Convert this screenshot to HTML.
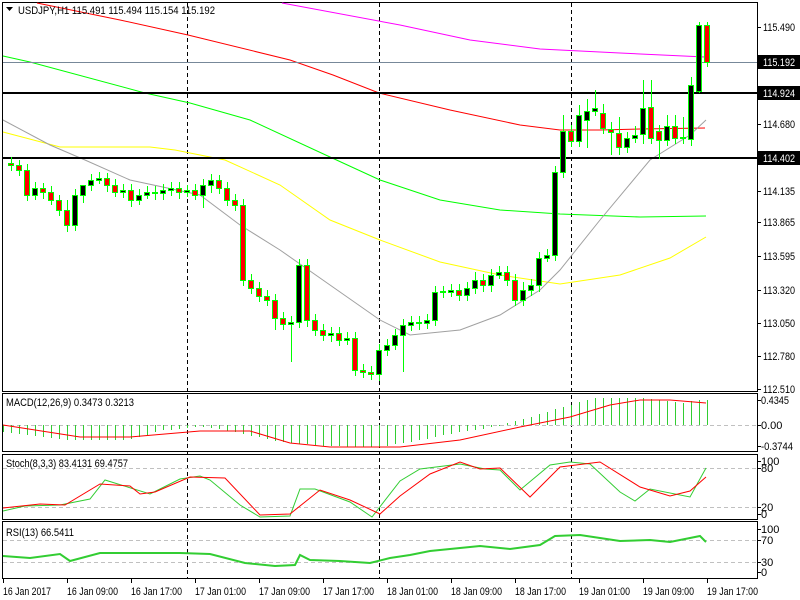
<!DOCTYPE html>
<html><head><meta charset="utf-8"><style>
html,body{margin:0;padding:0;background:#fff;width:800px;height:600px;overflow:hidden}
svg{display:block}
text{font-family:"Liberation Sans",sans-serif;font-size:11px;fill:#000}
.w{fill:#fff}
</style></head><body>
<svg width="800" height="600" xmlns="http://www.w3.org/2000/svg">
<rect width="800" height="600" fill="#fff"/>
<g fill="none" stroke="#000" stroke-width="1">
<rect x="2.5" y="2.5" width="755" height="389"/>
<rect x="2.5" y="393.5" width="755" height="58"/>
<rect x="2.5" y="454.5" width="755" height="65"/>
<rect x="2.5" y="521.5" width="755" height="57"/>
</g>
<g stroke="#000" stroke-dasharray="4,3" stroke-width="1">
<line x1="187.5" y1="3" x2="187.5" y2="578"/>
<line x1="379.5" y1="3" x2="379.5" y2="578"/>
<line x1="571.5" y1="3" x2="571.5" y2="578"/>
</g>
<g stroke="#c0c0c0" stroke-dasharray="4,3">
<line x1="3" y1="425.5" x2="757" y2="425.5"/>
<line x1="3" y1="468.5" x2="757" y2="468.5"/>
<line x1="3" y1="507.5" x2="757" y2="507.5"/>
<line x1="3" y1="540.5" x2="757" y2="540.5"/>
<line x1="3" y1="562.5" x2="757" y2="562.5"/>
</g>
<g fill="none" stroke-width="1">
<polyline stroke="#ff00ff" points="282,3 400,25 470,40 540,49 620,53 705,57"/>
<polyline stroke="#ff0000" points="37,3 120,20 188,35 290,60 333,75 379,93 450,110 520,125 560,130 600,130 640,129 705,128"/>
<polyline stroke="#00ff00" points="3,56 30,62 145,93 190,103 250,120 330,157 380,180 440,200 500,210 560,214 640,217 706,216"/>
<polyline stroke="#ffff00" points="3,132 60,147 150,147 175,150 225,160 280,185 330,220 380,240 440,262 500,275 560,284 620,275 670,258 706,237"/>
<polyline stroke="#a0a0a0" points="3,120 50,145 85,160 130,180 200,195 240,225 280,250 330,285 380,320 410,335 460,330 500,315 540,290 560,270 600,220 650,160 690,135 706,120"/>
</g>
<line x1="3" y1="62.5" x2="757" y2="62.5" stroke="#778899"/>
<line x1="3" y1="93" x2="757" y2="93" stroke="#000" stroke-width="2"/>
<line x1="3" y1="158" x2="757" y2="158" stroke="#000" stroke-width="2"/>
<!-- wicks -->
<path stroke="#00ff00" fill="none" d="M11.5 157V171M19.5 160V176M27.5 164V201M35.5 182V200M43.5 183V199M51.5 186V205M59.5 195V216M67.5 200V232M75.5 189V231M83.5 187V203M91.5 174V191M99.5 172V184M107.5 173V192M115.5 179V197M123.5 184V198M131.5 184V207M139.5 189V205M147.5 186V199M155.5 186V200M163.5 184V200M171.5 182V196M179.5 182V199M187.5 185V197M195.5 184V200M203.5 179V208M211.5 174V193M219.5 175V194M227.5 182V206M235.5 194V211M243.5 199V286M251.5 274V294M259.5 282V302M267.5 290V306M275.5 294V330M283.5 312V330M291.5 316V362M299.5 259V328M307.5 259V327M315.5 314V336M323.5 324V341M331.5 327V342M339.5 327V346M347.5 332V345M355.5 332V376M363.5 364V378M371.5 366V380M379.5 344V381M387.5 339V356M395.5 329V350M403.5 319V372M411.5 316V331M419.5 316V330M427.5 314V329M435.5 286V326M443.5 286V298M451.5 284V297M459.5 284V301M467.5 282V301M475.5 272V294M483.5 274V292M491.5 269V292M499.5 266V279M507.5 266V286M515.5 274V306M523.5 282V306M531.5 279V296M539.5 252V292M547.5 249V262M555.5 166V261M563.5 115V178M571.5 125V147M579.5 105V147M587.5 99V148M595.5 90V116M603.5 104V134M611.5 122V155M619.5 117V155M627.5 132V153M635.5 126V143M643.5 80V144M651.5 80V144M659.5 125V159M667.5 115V146M675.5 115V144M683.5 117V144M691.5 77V146M699.5 22V93M707.5 22V67"/>
<!-- bodies -->
<g stroke="#00ff00" stroke-width="1">
<rect x="8.5" y="163.5" width="5" height="2" fill="#f00"/>
<rect x="16.5" y="165.5" width="5" height="5" fill="#f00"/>
<rect x="24.5" y="170.5" width="5" height="25" fill="#f00"/>
<rect x="32.5" y="188.5" width="5" height="7" fill="#000"/>
<rect x="40.5" y="188.5" width="5" height="4" fill="#f00"/>
<rect x="48.5" y="192.5" width="5" height="8" fill="#f00"/>
<rect x="56.5" y="200.5" width="5" height="10" fill="#f00"/>
<rect x="64.5" y="210.5" width="5" height="15" fill="#f00"/>
<rect x="72.5" y="195.5" width="5" height="30" fill="#000"/>
<rect x="80.5" y="185.5" width="5" height="10" fill="#000"/>
<rect x="88.5" y="180.5" width="5" height="5" fill="#000"/>
<rect x="96.5" y="178.5" width="5" height="2" fill="#000"/>
<rect x="104.5" y="178.5" width="5" height="7" fill="#f00"/>
<rect x="112.5" y="185.5" width="5" height="7" fill="#f00"/>
<rect x="120.5" y="190.5" width="5" height="2" fill="#000"/>
<rect x="128.5" y="190.5" width="5" height="10" fill="#f00"/>
<rect x="136.5" y="195.5" width="5" height="5" fill="#000"/>
<rect x="144.5" y="192.5" width="5" height="3" fill="#000"/>
<rect x="152.5" y="192.5" width="5" height="1" fill="#f00"/>
<rect x="160.5" y="190.5" width="5" height="3" fill="#000"/>
<rect x="168.5" y="188.5" width="5" height="2" fill="#000"/>
<rect x="176.5" y="188.5" width="5" height="4" fill="#f00"/>
<rect x="184.5" y="190.5" width="5" height="2" fill="#000"/>
<rect x="192.5" y="190.5" width="5" height="5" fill="#f00"/>
<rect x="200.5" y="185.5" width="5" height="10" fill="#000"/>
<rect x="208.5" y="180.5" width="5" height="5" fill="#000"/>
<rect x="216.5" y="180.5" width="5" height="8" fill="#f00"/>
<rect x="224.5" y="188.5" width="5" height="12" fill="#f00"/>
<rect x="232.5" y="200.5" width="5" height="5" fill="#f00"/>
<rect x="240.5" y="205.5" width="5" height="75" fill="#f00"/>
<rect x="248.5" y="280.5" width="5" height="8" fill="#f00"/>
<rect x="256.5" y="288.5" width="5" height="8" fill="#f00"/>
<rect x="264.5" y="296.5" width="5" height="4" fill="#f00"/>
<rect x="272.5" y="300.5" width="5" height="18" fill="#f00"/>
<rect x="280.5" y="318.5" width="5" height="6" fill="#f00"/>
<rect x="288.5" y="322.5" width="5" height="2" fill="#000"/>
<rect x="296.5" y="265.5" width="5" height="57" fill="#000"/>
<rect x="304.5" y="265.5" width="5" height="55" fill="#f00"/>
<rect x="312.5" y="320.5" width="5" height="10" fill="#f00"/>
<rect x="320.5" y="330.5" width="5" height="5" fill="#f00"/>
<rect x="328.5" y="333.5" width="5" height="2" fill="#000"/>
<rect x="336.5" y="333.5" width="5" height="7" fill="#f00"/>
<rect x="344.5" y="338.5" width="5" height="2" fill="#000"/>
<rect x="352.5" y="338.5" width="5" height="32" fill="#f00"/>
<rect x="360.5" y="370.5" width="5" height="2" fill="#f00"/>
<rect x="368.5" y="372.5" width="5" height="2" fill="#f00"/>
<rect x="376.5" y="350.5" width="5" height="24" fill="#000"/>
<rect x="384.5" y="345.5" width="5" height="5" fill="#000"/>
<rect x="392.5" y="335.5" width="5" height="10" fill="#000"/>
<rect x="400.5" y="325.5" width="5" height="10" fill="#000"/>
<rect x="408.5" y="322.5" width="5" height="3" fill="#000"/>
<rect x="416.5" y="322.5" width="5" height="1" fill="#f00"/>
<rect x="424.5" y="320.5" width="5" height="3" fill="#000"/>
<rect x="432.5" y="292.5" width="5" height="28" fill="#000"/>
<rect x="440.5" y="291.5" width="5" height="1" fill="#000"/>
<rect x="448.5" y="290.5" width="5" height="2" fill="#000"/>
<rect x="456.5" y="290.5" width="5" height="5" fill="#f00"/>
<rect x="464.5" y="288.5" width="5" height="7" fill="#000"/>
<rect x="472.5" y="280.5" width="5" height="8" fill="#000"/>
<rect x="480.5" y="280.5" width="5" height="5" fill="#f00"/>
<rect x="488.5" y="275.5" width="5" height="10" fill="#000"/>
<rect x="496.5" y="272.5" width="5" height="3" fill="#000"/>
<rect x="504.5" y="272.5" width="5" height="8" fill="#f00"/>
<rect x="512.5" y="280.5" width="5" height="20" fill="#f00"/>
<rect x="520.5" y="290.5" width="5" height="10" fill="#000"/>
<rect x="528.5" y="285.5" width="5" height="5" fill="#000"/>
<rect x="536.5" y="258.5" width="5" height="27" fill="#000"/>
<rect x="544.5" y="255.5" width="5" height="3" fill="#000"/>
<rect x="552.5" y="172.5" width="5" height="83" fill="#000"/>
<rect x="560.5" y="131.5" width="5" height="41" fill="#000"/>
<rect x="568.5" y="131.5" width="5" height="10" fill="#f00"/>
<rect x="576.5" y="115.5" width="5" height="26" fill="#000"/>
<rect x="584.5" y="111.5" width="5" height="9" fill="#000"/>
<rect x="592.5" y="108.5" width="5" height="3" fill="#000"/>
<rect x="600.5" y="113.5" width="5" height="15" fill="#f00"/>
<rect x="608.5" y="129.5" width="5" height="3" fill="#f00"/>
<rect x="616.5" y="133.5" width="5" height="14" fill="#f00"/>
<rect x="624.5" y="138.5" width="5" height="9" fill="#000"/>
<rect x="632.5" y="135.5" width="5" height="3" fill="#000"/>
<rect x="640.5" y="108.5" width="5" height="26" fill="#000"/>
<rect x="648.5" y="107.5" width="5" height="31" fill="#f00"/>
<rect x="656.5" y="131.5" width="5" height="9" fill="#f00"/>
<rect x="664.5" y="126.5" width="5" height="14" fill="#000"/>
<rect x="672.5" y="126.5" width="5" height="12" fill="#f00"/>
<rect x="680.5" y="137.5" width="5" height="1" fill="#000"/>
<rect x="688.5" y="85.5" width="5" height="54" fill="#000"/>
<rect x="696.5" y="25.5" width="5" height="66" fill="#000"/>
<rect x="704.5" y="25.5" width="5" height="37" fill="#f00"/>
</g>
<!-- MACD histogram -->
<path stroke="#32cd32" fill="none" d="M3.5 425V432M11.5 425V433M19.5 425V434M27.5 425V435M35.5 425V436M43.5 425V437M51.5 425V438M59.5 425V439M67.5 425V440M75.5 425V440M83.5 425V440M91.5 425V440M99.5 425V440M107.5 425V440M115.5 425V440M123.5 425V440M131.5 425V439M139.5 425V437M147.5 425V435M155.5 425V432M163.5 425V430M171.5 425V430M179.5 425V429M187.5 425V428M195.5 425V427M203.5 425V427M211.5 425V428M219.5 425V429M227.5 425V431M235.5 425V432M243.5 425V434M251.5 425V436M259.5 425V437M267.5 425V439M275.5 425V441M283.5 425V442M291.5 425V443M299.5 425V444M307.5 425V444M315.5 425V445M323.5 425V446M331.5 425V446M339.5 425V446M347.5 425V447M355.5 425V447M363.5 425V447M371.5 425V447M379.5 425V447M387.5 425V446M395.5 425V444M403.5 425V443M411.5 425V442M419.5 425V440M427.5 425V439M435.5 425V437M443.5 425V435M451.5 425V434M459.5 425V432M467.5 425V431M475.5 425V430M483.5 425V429M491.5 425V427M499.5 425V426M507.5 425V423M515.5 425V421M523.5 425V419M531.5 425V417M539.5 425V414M547.5 425V412M555.5 425V409M563.5 425V407M571.5 425V405M579.5 425V402M587.5 425V400M595.5 425V398M603.5 425V398M611.5 425V398M619.5 425V398M627.5 425V398M635.5 425V398M643.5 425V398M651.5 425V399M659.5 425V400M667.5 425V401M675.5 425V402M683.5 425V403M691.5 425V401M699.5 425V400M707.5 425V400"/>
<polyline fill="none" stroke="#ff0000" points="3,425 80,437 130,437 200,431 250,431 290,443 330,447 400,447 460,440 520,427 570,417 610,405 640,400 670,400 706,403"/>
<polyline fill="none" stroke="#32cd32" points="3,511 25,506 60,505 90,499 105,480 150,494 180,479 200,476 210,480 240,505 260,517 290,516 300,489 315,489 350,502 372,517 400,481 420,469 460,464 485,469 500,470 520,490 550,465 570,462 590,464 620,492 635,501 650,489 690,497 706,468"/>
<polyline fill="none" stroke="#ff0000" points="3,508 40,504 65,505 100,484 130,486 140,494 155,492 190,477 225,478 260,515 290,514 320,490 350,500 380,514 400,496 430,474 460,462 480,469 500,468 530,497 560,467 600,462 640,487 670,496 690,491 706,477"/>
<polyline fill="none" stroke="#32cd32" stroke-width="2" points="3,556 30,558 60,554 70,561 100,553 150,553 180,553 210,554 245,563 275,566 295,565 300,555 310,560 340,561 370,563 390,558 410,555 430,551 450,549 480,546 510,549 540,545 555,536 580,535 600,538 620,541 650,540 670,542 690,538 700,536 706,542"/>
<path d="M6 7H13L9.5 11Z" fill="#000"/>
<text x="18" y="14" textLength="197" lengthAdjust="spacingAndGlyphs">USDJPY,H1  115.491 115.494 115.154 115.192</text>
<text x="6" y="406" textLength="128" lengthAdjust="spacingAndGlyphs">MACD(12,26,9) 0.3473 0.3213</text>
<text x="6" y="467" textLength="122" lengthAdjust="spacingAndGlyphs">Stoch(8,3,3) 83.4131 69.4757</text>
<text x="6" y="536" textLength="68" lengthAdjust="spacingAndGlyphs">RSI(13) 66.5411</text>
<path stroke="#000" d="M757 27.5h4M757 62.5h4M757 93.5h4M757 124.5h4M757 158.5h4M757 191.5h4M757 222.5h4M757 256.5h4M757 290.5h4M757 323.5h4M757 356.5h4M757 389.5h4M757 400.5h4M757 425.5h4M757 446.5h4M757 461.5h4M757 468.5h4M757 507.5h4M757 514.5h4M757 529.5h4M757 540.5h4M757 562.5h4M757 572.5h4M3.5 579v4M67.5 579v4M131.5 579v4M195.5 579v4M259.5 579v4M323.5 579v4M387.5 579v4M451.5 579v4M515.5 579v4M579.5 579v4M643.5 579v4M707.5 579v4"/>
<rect x="758" y="55" width="42" height="14" fill="#000"/>
<rect x="758" y="86" width="42" height="14" fill="#000"/>
<rect x="758" y="151" width="42" height="14" fill="#000"/>
<g>
<text x="763" y="31" textLength="32" lengthAdjust="spacingAndGlyphs">115.490</text>
<text x="763" y="66" class="w" textLength="32" lengthAdjust="spacingAndGlyphs">115.192</text>
<text x="763" y="97" class="w" textLength="32" lengthAdjust="spacingAndGlyphs">114.924</text>
<text x="763" y="128" textLength="32" lengthAdjust="spacingAndGlyphs">114.680</text>
<text x="763" y="162" class="w" textLength="32" lengthAdjust="spacingAndGlyphs">114.402</text>
<text x="763" y="195" textLength="32" lengthAdjust="spacingAndGlyphs">114.135</text>
<text x="763" y="226" textLength="32" lengthAdjust="spacingAndGlyphs">113.865</text>
<text x="763" y="260" textLength="32" lengthAdjust="spacingAndGlyphs">113.595</text>
<text x="763" y="294" textLength="32" lengthAdjust="spacingAndGlyphs">113.320</text>
<text x="763" y="327" textLength="32" lengthAdjust="spacingAndGlyphs">113.050</text>
<text x="763" y="360" textLength="32" lengthAdjust="spacingAndGlyphs">112.780</text>
<text x="763" y="393" textLength="32" lengthAdjust="spacingAndGlyphs">112.510</text>
<text x="761" y="404" textLength="28" lengthAdjust="spacingAndGlyphs">0.4345</text>
<text x="761" y="429">0.00</text>
<text x="761" y="450" textLength="32" lengthAdjust="spacingAndGlyphs">-0.3744</text>
<text x="761" y="465">100</text>
<text x="761" y="472">80</text>
<text x="761" y="511">20</text>
<text x="761" y="518">0</text>
<text x="761" y="533">100</text>
<text x="761" y="544">70</text>
<text x="761" y="566">30</text>
<text x="761" y="576">0</text>
</g>
<g>
<text x="3" y="595" textLength="48" lengthAdjust="spacingAndGlyphs">16 Jan 2017</text>
<text x="67" y="595" textLength="51" lengthAdjust="spacingAndGlyphs">16 Jan 09:00</text>
<text x="131" y="595" textLength="51" lengthAdjust="spacingAndGlyphs">16 Jan 17:00</text>
<text x="195" y="595" textLength="51" lengthAdjust="spacingAndGlyphs">17 Jan 01:00</text>
<text x="259" y="595" textLength="51" lengthAdjust="spacingAndGlyphs">17 Jan 09:00</text>
<text x="323" y="595" textLength="51" lengthAdjust="spacingAndGlyphs">17 Jan 17:00</text>
<text x="387" y="595" textLength="51" lengthAdjust="spacingAndGlyphs">18 Jan 01:00</text>
<text x="451" y="595" textLength="51" lengthAdjust="spacingAndGlyphs">18 Jan 09:00</text>
<text x="515" y="595" textLength="51" lengthAdjust="spacingAndGlyphs">18 Jan 17:00</text>
<text x="579" y="595" textLength="51" lengthAdjust="spacingAndGlyphs">19 Jan 01:00</text>
<text x="643" y="595" textLength="51" lengthAdjust="spacingAndGlyphs">19 Jan 09:00</text>
<text x="707" y="595" textLength="51" lengthAdjust="spacingAndGlyphs">19 Jan 17:00</text>
</g>
</svg>
</body></html>
